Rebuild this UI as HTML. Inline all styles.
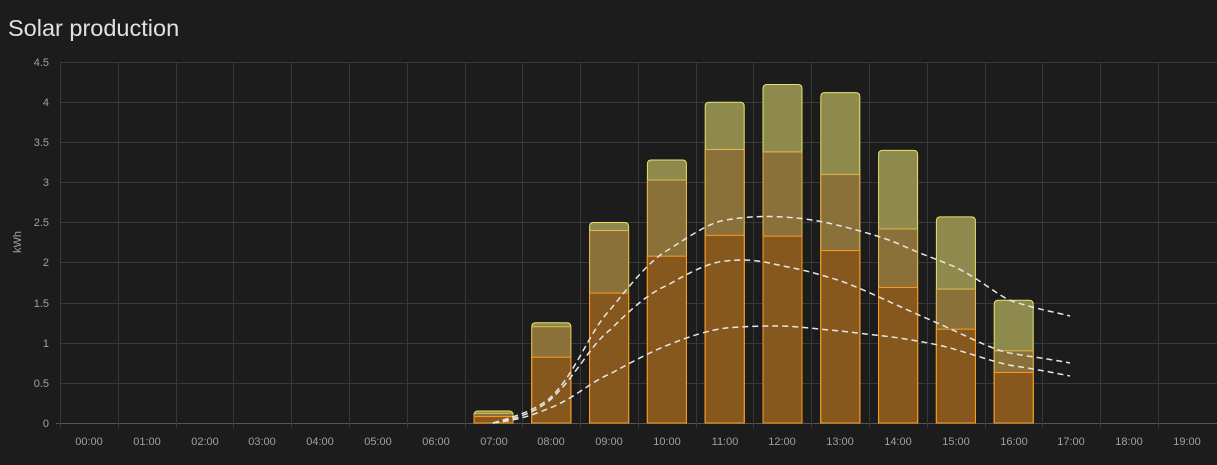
<!DOCTYPE html>
<html><head><meta charset="utf-8"><style>
html,body{margin:0;padding:0;background:#1c1c1c;width:1217px;height:465px;overflow:hidden;font-family:"Liberation Sans",sans-serif}
.t{position:absolute;left:8px;top:15px;font-size:23.5px;color:#e1e1e1}
svg{position:absolute;left:0;top:0}
</style></head><body>
<div class="t">Solar production</div>
<svg width="1217" height="465" font-family="Liberation Sans, sans-serif">
<g stroke="#383838" stroke-width="1">
<line x1="60" y1="62.5" x2="1217" y2="62.5"/><line x1="60" y1="102.5" x2="1217" y2="102.5"/><line x1="60" y1="142.5" x2="1217" y2="142.5"/><line x1="60" y1="182.5" x2="1217" y2="182.5"/><line x1="60" y1="222.5" x2="1217" y2="222.5"/><line x1="60" y1="262.5" x2="1217" y2="262.5"/><line x1="60" y1="303.5" x2="1217" y2="303.5"/><line x1="60" y1="343.5" x2="1217" y2="343.5"/><line x1="60" y1="383.5" x2="1217" y2="383.5"/>
<line x1="56" y1="423.5" x2="1217" y2="423.5" stroke="#555"/>
</g>
<g stroke="#383838">
<line x1="60.5" y1="62" x2="60.5" y2="428"/><line x1="118.5" y1="62" x2="118.5" y2="428"/><line x1="176.5" y1="62" x2="176.5" y2="428"/><line x1="233.5" y1="62" x2="233.5" y2="428"/><line x1="291.5" y1="62" x2="291.5" y2="428"/><line x1="349.5" y1="62" x2="349.5" y2="428"/><line x1="407.5" y1="62" x2="407.5" y2="428"/><line x1="465.5" y1="62" x2="465.5" y2="428"/><line x1="522.5" y1="62" x2="522.5" y2="428"/><line x1="580.5" y1="62" x2="580.5" y2="428"/><line x1="638.5" y1="62" x2="638.5" y2="428"/><line x1="696.5" y1="62" x2="696.5" y2="428"/><line x1="753.5" y1="62" x2="753.5" y2="428"/><line x1="811.5" y1="62" x2="811.5" y2="428"/><line x1="869.5" y1="62" x2="869.5" y2="428"/><line x1="927.5" y1="62" x2="927.5" y2="428"/><line x1="985.5" y1="62" x2="985.5" y2="428"/><line x1="1042.5" y1="62" x2="1042.5" y2="428"/><line x1="1100.5" y1="62" x2="1100.5" y2="428"/><line x1="1158.5" y1="62" x2="1158.5" y2="428"/>
</g>
<g fill="#a0a0a0" font-size="11" text-anchor="end">
<text x="49" y="66">4.5</text><text x="49" y="106">4</text><text x="49" y="146">3.5</text><text x="49" y="186">3</text><text x="49" y="226">2.5</text><text x="49" y="266">2</text><text x="49" y="307">1.5</text><text x="49" y="347">1</text><text x="49" y="387">0.5</text><text x="49" y="427">0</text>
</g>
<text transform="translate(21,242) rotate(-90)" fill="#a0a0a0" font-size="11" text-anchor="middle">kWh</text>
<g fill="#a0a0a0" font-size="11" text-anchor="middle">
<text x="89" y="445">00:00</text><text x="147" y="445">01:00</text><text x="205" y="445">02:00</text><text x="262" y="445">03:00</text><text x="320" y="445">04:00</text><text x="378" y="445">05:00</text><text x="436" y="445">06:00</text><text x="494" y="445">07:00</text><text x="551" y="445">08:00</text><text x="609" y="445">09:00</text><text x="667" y="445">10:00</text><text x="725" y="445">11:00</text><text x="782" y="445">12:00</text><text x="840" y="445">13:00</text><text x="898" y="445">14:00</text><text x="956" y="445">15:00</text><text x="1014" y="445">16:00</text><text x="1071" y="445">17:00</text><text x="1129" y="445">18:00</text><text x="1187" y="445">19:00</text>
</g>
<g id="bars"></g>
<g fill="none" stroke="#e6e6e6" stroke-width="1.5" stroke-dasharray="6,4">
<path d="M493,423 C520,415 535,410 550,398 C575,375 590,330 610,310 C630,285 650,260 668,250 C690,236 710,222 726,220 C750,216 770,216 783,217 C805,218 825,222 841,226 C865,232 885,238 899,244 C925,256 945,262 957,268 C985,282 1000,298 1015,302 C1040,310 1055,312 1070,316"/>
<path d="M493,423 C520,418 535,412 550,400 C575,378 590,345 610,330 C630,310 650,292 668,285 C690,272 710,262 726,261 C750,258 765,262 783,266 C805,270 825,276 841,281 C865,290 885,300 899,306 C925,318 945,326 957,332 C985,345 1000,352 1015,354 C1040,358 1055,360 1070,363"/>
<path d="M493,423 C520,420 535,414 550,408 C575,398 590,382 610,374 C630,363 650,352 668,345 C690,336 710,330 726,328 C750,326 765,326 783,326 C805,327 825,330 841,331 C865,334 885,336 899,338 C925,342 945,346 957,350 C985,358 1000,364 1015,366 C1040,370 1055,373 1070,376"/>
</g>
</svg>
<script>
var d=[[7,0.15,0.12,0.08],[8,1.25,1.2,0.82],[9,2.5,2.4,1.62],[10,3.28,3.03,2.08],[11,4.0,3.41,2.34],[12,4.22,3.38,2.33],[13,4.12,3.1,2.15],[14,3.4,2.42,1.69],[15,2.57,1.67,1.17],[16,1.53,0.9,0.63]];
var s='';function Y(v){return 423-v*80.2}
d.forEach(function(b){var x=60+57.8*b[0]+8.9,w=40;
s+='<path d="M'+(x+0.5)+',423 V'+(Y(b[1])+4)+' Q'+(x+0.5)+','+Y(b[1])+' '+(x+4.5)+','+Y(b[1])+' H'+(x+w-4.5)+' Q'+(x+w-0.5)+','+Y(b[1])+' '+(x+w-0.5)+','+(Y(b[1])+4)+' V423" fill="#8e8a4e" stroke="#e6e66a" stroke-width="1"/>';
s+='<rect x="'+(x+0.5)+'" y="'+Y(b[2])+'" width="'+(w-1)+'" height="'+(423-Y(b[2]))+'" fill="#8a7039" stroke="#e8b84a" stroke-width="1"/>';
s+='<rect x="'+(x+0.5)+'" y="'+Y(b[3])+'" width="'+(w-1)+'" height="'+(423-Y(b[3]))+'" fill="#87581d" stroke="#ff9a1e" stroke-width="1"/>';});
document.getElementById('bars').innerHTML=s;
</script>
</body></html>
